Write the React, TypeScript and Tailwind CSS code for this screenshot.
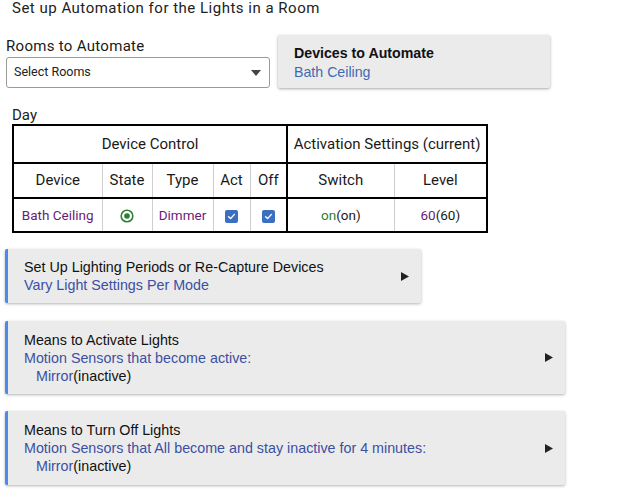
import React from "react";

const roboto = { fontFamily: "Roboto, 'Liberation Sans', sans-serif" };

function Arrow() {
  return (
    <svg width="8" height="9" viewBox="0 0 8 9" className="shrink-0">
      <path d="M0 0 L8 4.5 L0 9 Z" fill="#222" />
    </svg>
  );
}

function Check() {
  return (
    <span className="inline-flex w-[13px] h-[13px] rounded-[2px] bg-[#3b6fc0] items-center justify-center align-middle">
      <svg width="9" height="9" viewBox="0 0 9 9">
        <path d="M1.6 4.7 L3.6 6.6 L7.4 2.4" stroke="#fff" strokeWidth="1.4" fill="none" strokeLinecap="round" strokeLinejoin="round" />
      </svg>
    </span>
  );
}

function Radio() {
  return (
    <svg width="14" height="14" viewBox="0 0 14 14" className="inline-block align-middle">
      <circle cx="7" cy="7" r="5.8" stroke="#2e7d32" strokeWidth="1.6" fill="none" />
      <circle cx="7" cy="7" r="2.8" fill="#2e7d32" />
    </svg>
  );
}

function Section({
  title,
  sub,
  extra,
  className,
}: {
  title: string;
  sub: string;
  extra?: boolean;
  className: string;
}) {
  return (
    <div
      className={`flex items-center bg-[#ebebeb] border-l-[3px] border-[#4a8ae8] rounded-[2px] shadow-[0_1px_3px_rgba(0,0,0,0.3)] pl-[16px] pr-[12px] ${className}`}
      style={{ fontFamily: "'Liberation Sans', Arial, sans-serif" }}
    >
      <div className="flex-1 text-[14.3px] leading-[18px]">
        <div className="text-[#111]">{title}</div>
        <div className="text-[#3b4fa3]">{sub}</div>
        {extra && (
          <div className="pl-[12px]">
            <span className="text-[#3b4fa3]">Mirror</span>
            <span className="text-[#111]">(inactive)</span>
          </div>
        )}
      </div>
      <Arrow />
    </div>
  );
}

export default function App() {
  const th = "border-x border-[#cfcfcf] font-normal text-center";
  return (
    <div className="w-[629px] h-[500px] bg-white overflow-hidden text-[#1a1a1a]" style={roboto}>
      <div className="pl-[12px] pt-0 text-[15px] leading-[17px] tracking-[0.5px] text-[#222]">
        Set up Automation for the Lights in a Room
      </div>

      <div className="flex items-start mt-[18px]">
        <div className="ml-[6px] w-[264px] mt-[2px]">
          <div className="text-[15px] leading-[18px] tracking-[0.3px] text-[#1a1a1a]">Rooms to Automate</div>
          <div className="mt-[2px] h-[31px] border border-[#9a9a9a] rounded-[3px] flex items-center px-[7px] text-[12.5px] text-[#222] bg-white">
            <span className="flex-1">Select Rooms</span>
            <svg width="10" height="6" viewBox="0 0 10 6" className="mr-[1px]">
              <path d="M0 0 L10 0 L5 6 Z" fill="#444" />
            </svg>
          </div>
        </div>
        <div
          className="ml-[8px] w-[272px] h-[53px] bg-[#ebebeb] rounded-[2px] shadow-[0_1px_3px_rgba(0,0,0,0.35)] px-[16px] pt-[9px] text-[14.2px] leading-[19px]"
          style={{ fontFamily: "'Liberation Sans', Arial, sans-serif" }}
        >
          <div className="font-bold text-[#111]">Devices to Automate</div>
          <div className="text-[#3d6bb3]">Bath Ceiling</div>
        </div>
      </div>

      <div className="pl-[12px] mt-[18px] text-[15px] leading-[18px] text-[#222]">Day</div>

      <table className="ml-[12px] mt-0 border-collapse table-fixed w-[474px] text-[15px] text-[#1a1a1a]">
        <colgroup>
          <col className="w-[89px]" />
          <col className="w-[50px]" />
          <col className="w-[61px]" />
          <col className="w-[37px]" />
          <col className="w-[37px]" />
          <col className="w-[107px]" />
          <col className="w-[93px]" />
        </colgroup>
        <tbody>
          <tr className="h-[38px] border-2 border-black">
            <th colSpan={5} className="font-normal text-center border-2 border-black">Device Control</th>
            <th colSpan={2} className="font-normal text-center border-2 border-black">Activation Settings (current)</th>
          </tr>
          <tr className="h-[35px] border-2 border-black">
            <th className={`${th} border-l-2 border-l-black`}>Device</th>
            <th className={th}>State</th>
            <th className={th}>Type</th>
            <th className={th}>Act</th>
            <th className={`${th} border-r-2 border-r-black`}>Off</th>
            <th className={th}>Switch</th>
            <th className={`${th} border-r-2 border-r-black`}>Level</th>
          </tr>
          <tr className="h-[34px] border-2 border-black text-[13.5px]">
            <td className={`${th} border-l-2 border-l-black text-[#6a1b7a]`}>Bath Ceiling</td>
            <td className={th}><Radio /></td>
            <td className={`${th} text-[#6a1b7a]`}>Dimmer</td>
            <td className={th}><Check /></td>
            <td className={`${th} border-r-2 border-r-black`}><Check /></td>
            <td className={th}><span className="text-[#2e7d32]">on</span>(on)</td>
            <td className={`${th} border-r-2 border-r-black`}><span className="text-[#6a1b7a]">60</span>(60)</td>
          </tr>
        </tbody>
      </table>

      <div className="pl-[5px] pt-[16px] flex flex-col">
        <Section className="w-[416px] h-[54px]" title="Set Up Lighting Periods or Re-Capture Devices" sub="Vary Light Settings Per Mode" />
        <Section className="w-[560px] h-[73px] mt-[18px]" title="Means to Activate Lights" sub="Motion Sensors that become active:" extra />
        <Section className="w-[560px] h-[74px] mt-[17px]" title="Means to Turn Off Lights" sub="Motion Sensors that All become and stay inactive for 4 minutes:" extra />
      </div>
    </div>
  );
}
